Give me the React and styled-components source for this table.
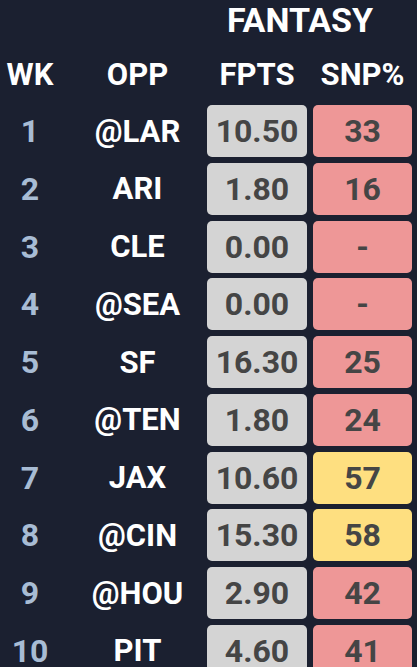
import React from "react";
import styled, { createGlobalStyle } from "styled-components";

const Global = createGlobalStyle`
  html, body { margin: 0; padding: 0; background: #1b2030; }
  body { font-family: Roboto, "Liberation Sans", Arial, sans-serif; }
`;

const Page = styled.div`
  width: 417px;
  height: 667px;
  overflow: hidden;
  background: #1b2030;
`;

const Grid = styled.div`
  display: grid;
  grid-template-columns: 60px 147px 100px 105px;
`;

const GroupTitle = styled.div`
  grid-column: 3 / 5;
  text-align: center;
  padding-right: 19px;
  color: #ffffff;
  font-weight: 700;
  font-size: 34px;
  line-height: 40px;
  height: 40px;
`;

const HeadCell = styled.div`
  text-align: center;
  color: #ffffff;
  font-weight: 700;
  font-size: 31px;
  line-height: 36px;
  margin-top: 17px;
  margin-bottom: 12px;
  padding-left: ${(p) => p.$pl || 0}px;
`;

const Rows = styled.div`
  display: flex;
  flex-direction: column;
  gap: 5.75px;
`;

const Row = styled(Grid)`
  height: 52px;
  align-items: stretch;
`;

const Week = styled.div`
  display: flex;
  align-items: center;
  justify-content: center;
  color: #a8bcd4;
  font-weight: 700;
  font-size: 32px;
`;

const Opp = styled.div`
  display: flex;
  align-items: center;
  justify-content: center;
  padding-left: 8px;
  color: #ffffff;
  font-weight: 700;
  font-size: 31px;
`;

const Box = styled.div`
  display: flex;
  align-items: center;
  justify-content: center;
  margin-left: ${(p) => p.$ml || 0}px;
  border-radius: 5px;
  background: ${(p) => p.$bg};
  color: #454545;
  font-weight: 700;
  font-size: 32px;
`;

const bgFor = (snp) => {
  const n = Number(snp);
  if (snp !== "-" && n >= 50) return "#fedf80";
  return "#ee9797";
};

const data = [
  [1, "@LAR", "10.50", "33"],
  [2, "ARI", "1.80", "16"],
  [3, "CLE", "0.00", "-"],
  [4, "@SEA", "0.00", "-"],
  [5, "SF", "16.30", "25"],
  [6, "@TEN", "1.80", "24"],
  [7, "JAX", "10.60", "57"],
  [8, "@CIN", "15.30", "58"],
  [9, "@HOU", "2.90", "42"],
  [10, "PIT", "4.60", "41"],
];

export default function App() {
  return (
    <Page>
      <Global />
      <Grid>
        <GroupTitle>FANTASY</GroupTitle>
        <HeadCell>WK</HeadCell>
        <HeadCell $pl={8}>OPP</HeadCell>
        <HeadCell>FPTS</HeadCell>
        <HeadCell $pl={6}>SNP%</HeadCell>
      </Grid>
      <Rows>
        {data.map(([wk, opp, fpts, snp]) => (
          <Row key={wk}>
            <Week>{wk}</Week>
            <Opp>{opp}</Opp>
            <Box $bg="#d4d4d4">{fpts}</Box>
            <Box $bg={bgFor(snp)} $ml={6}>{snp}</Box>
          </Row>
        ))}
      </Rows>
    </Page>
  );
}
